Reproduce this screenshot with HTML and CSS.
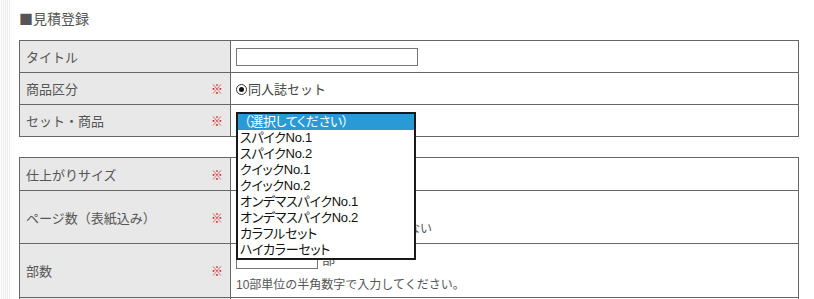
FILE: index.html
```html
<!DOCTYPE html>
<html lang="ja">
<head>
    <meta charset="UTF-8">
    <title>見積登録</title>
    <link rel="stylesheet" href="styles.css">
</head>
<body>

<div class="page">
    <div class="edge"></div>
    <div class="main">
        <h1 class="page-title">■見積登録</h1>

        <table class="form-table">
            <tr>
                <th><div class="label">タイトル</div></th>
                <td><input type="text" class="text-input title-input"></td>
            </tr>
            <tr>
                <th><div class="label">商品区分<span class="req">※</span></div></th>
                <td><span class="radio checked"></span><span class="radio-text">同人誌セット</span></td>
            </tr>
            <tr>
                <th><div class="label">セット・商品<span class="req">※</span></div></th>
                <td class="set-cell">
                    <div class="select-box"></div>
                    <!-- opened dropdown list -->
                    <ul class="listbox">
                        <li class="selected">（選択してください）</li>
                        <li>スパイクNo.1</li>
                        <li>スパイクNo.2</li>
                        <li>クイックNo.1</li>
                        <li>クイックNo.2</li>
                        <li>オンデマスパイクNo.1</li>
                        <li>オンデマスパイクNo.2</li>
                        <li>カラフルセット</li>
                        <li>ハイカラーセット</li>
                    </ul>
                </td>
            </tr>
        </table>

        <table class="form-table second">
            <tr class="row-size">
                <th><div class="label">仕上がりサイズ<span class="req">※</span></div></th>
                <td><div class="select-box"></div></td>
            </tr>
            <tr class="row-page">
                <th><div class="label">ページ数（表紙込み）<span class="req">※</span></div></th>
                <td>
                    <input type="text" class="text-input small-input">
                    <p class="note">表紙は含まない</p>
                </td>
            </tr>
            <tr class="row-tall">
                <th><div class="label">部数<span class="req">※</span></div></th>
                <td>
                    <input type="text" class="text-input small-input"><span class="unit">部</span>
                    <p class="note">10部単位の半角数字で入力してください。</p>
                </td>
            </tr>
            <tr class="row-tall">
                <th></th>
                <td></td>
            </tr>
        </table>
    </div>
</div>

</body>
</html>
```

FILE: styles.css
```css
body {
    margin: 0;
    background-color: #ffffff;
    color: #555;
    font-family: "Liberation Sans", "Noto Sans CJK JP", sans-serif;
    font-size: 13px;
}
.page {
    display: flex;
    min-height: 299px;
}
.edge {
    width: 10px;
    flex-shrink: 0;
    background: repeating-linear-gradient(90deg, #ffffff 0 1px, #ececec 1px 2px);
}
.main {
    padding-left: 9px;
}
.page-title {
    margin: 8px 0 12px;
    font-family: "Noto Sans CJK JP", sans-serif;
    font-size: 14px;
    line-height: 20px;
    font-weight: normal;
    color: #555;
}
.form-table {
    width: 780px;
    border-collapse: collapse;
    border: 1px solid #666;
}
.form-table.second {
    margin-top: 20px;
}
.form-table th,
.form-table td {
    border: 1px solid #666;
    height: 32px;
    padding: 0 6px;
    box-sizing: border-box;
    vertical-align: middle;
}
.form-table th {
    width: 211px;
    background-color: #e8e8e8;
    font-weight: normal;
    text-align: left;
}
.form-table td {
    padding-left: 5px;
}
.label {
    display: flex;
    justify-content: space-between;
    align-items: center;
    padding-right: 1px;
}
.req {
    color: #d42020;
    font-size: 12px;
}
.row-size th,
.row-size td {
    height: 33px;
}
.row-page th,
.row-page td {
    height: 53px;
}
.row-tall th,
.row-tall td {
    height: 54px;
}
.text-input {
    height: 18px;
    box-sizing: border-box;
    border: 1px solid #777;
    margin: 0;
    padding: 0 2px;
    vertical-align: middle;
}
.title-input {
    width: 182px;
}
.small-input {
    width: 82px;
}
.unit {
    margin-left: 4px;
}
.note {
    margin: 6px 0 0;
    font-size: 12px;
}
.row-page .note {
    margin-top: 3px;
    padding-left: 112px;
}
.radio {
    display: inline-block;
    width: 11px;
    height: 11px;
    border: 1px solid #333;
    border-radius: 50%;
    box-sizing: border-box;
    vertical-align: -1px;
    position: relative;
}
.radio.checked::after {
    content: "";
    position: absolute;
    left: 2px;
    top: 2px;
    width: 5px;
    height: 5px;
    border-radius: 50%;
    background-color: #111;
}
.radio-text {
    margin-left: 1px;
    color: #444;
}
.set-cell {
    position: relative;
}
.select-box {
    width: 180px;
    height: 18px;
    border: 1px solid #777;
    box-sizing: border-box;
}
.listbox {
    position: absolute;
    left: 5px;
    top: 7px;
    z-index: 5;
    width: 180px;
    margin: 0;
    padding: 0;
    list-style: none;
    box-sizing: border-box;
    border: 2px solid #1a1a1a;
    background-color: #ffffff;
    font-size: 13px;
    line-height: 16px;
    letter-spacing: -0.3px;
    color: #111;
    font-feature-settings: "palt";
}
.listbox li {
    height: 16px;
    padding-left: 2px;
    white-space: nowrap;
}
.listbox li.selected {
    background-color: #2a9ad6;
    color: #ffffff;
    padding-left: 6px;
}
```
